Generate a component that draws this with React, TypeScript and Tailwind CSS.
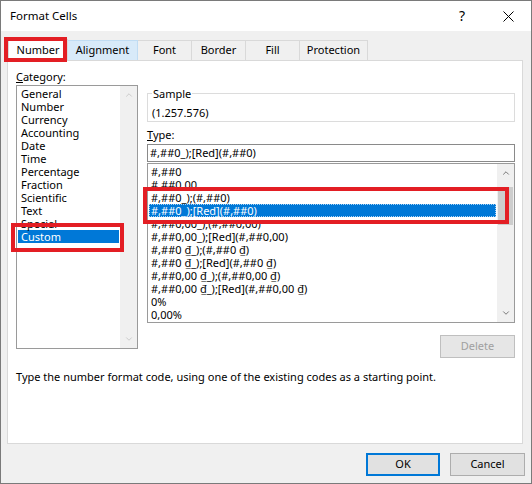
import { ChevronUp, ChevronDown } from "lucide-react";

const categories = [
  "General",
  "Number",
  "Currency",
  "Accounting",
  "Date",
  "Time",
  "Percentage",
  "Fraction",
  "Scientific",
  "Text",
  "Special",
  "Custom",
];

const formats = [
  "#,##0",
  "#,##0,00",
  "#,##0_);(#,##0)",
  "#,##0_);[Red](#,##0)",
  "#,##0,00_);(#,##0,00)",
  "#,##0,00_);[Red](#,##0,00)",
  "#,##0 ₫_);(#,##0 ₫)",
  "#,##0 ₫_);[Red](#,##0 ₫)",
  "#,##0,00 ₫_);(#,##0,00 ₫)",
  "#,##0,00 ₫_);[Red](#,##0,00 ₫)",
  "0%",
  "0,00%",
];

const tabs = [
  { label: "Alignment", w: "w-[71px]", hover: true },
  { label: "Font", w: "w-[55px]" },
  { label: "Border", w: "w-[55px]" },
  { label: "Fill", w: "w-[55px]" },
  { label: "Protection", w: "w-[69px]" },
];

export default function App() {
  return (
    <div
      className="relative w-[532px] h-[484px] bg-[#f0f0f0] border border-[#7a7a7a] text-[11px] text-black overflow-hidden"
      style={{ fontFamily: '"Noto Sans", "Open Sans", sans-serif' }}
    >
      {/* Title bar */}
      <div className="h-[30px] bg-white flex items-center pl-[9px] pr-[17px]">
        <span className="text-[11.5px]">Format Cells</span>
        <span className="ml-auto text-[14px] leading-none mr-[38px]">?</span>
        <svg width="11" height="11" viewBox="0 0 11 11" className="mt-px">
          <path d="M0.5 0.5 L10.5 10.5 M10.5 0.5 L0.5 10.5" stroke="#000" strokeWidth="1" />
        </svg>
      </div>

      {/* Tabs */}
      <div className="mt-[9px] h-[20px] flex items-end pl-[7px]">
        <div className="relative z-10 w-[60px] h-[22px] -mb-px bg-white border border-b-0 border-[#d9d9d9] flex items-center justify-center">
          Number
        </div>
        {tabs.map((t) => (
          <div
            key={t.label}
            className={`${t.w} h-[20px] -ml-px border border-b-0 flex items-center justify-center ${
              t.hover ? "bg-[#d8eaf9] border-[#c0dcf3] z-[1]" : "bg-[#f0f0f0] border-[#d9d9d9]"
            }`}
          >
            {t.label}
          </div>
        ))}
      </div>

      {/* Panel */}
      <div className="ml-[6px] w-[516px] h-[384px] bg-white border border-[#d9d9d9] pt-[8px] pl-[8px]">
        <div className="flex items-start">
          {/* Category column */}
          <div className="w-[122px]">
            <div className="h-[15px] leading-[15px]">
              <span className="underline">C</span>ategory:
            </div>
            <div className="mt-px h-[264px] border border-[#9a9a9a] flex">
              <div className="flex-1 pt-[1px] pl-px">
                {categories.map((c) => (
                  <div
                    key={c}
                    className={`h-[13px] leading-[13px] pl-[3px] ${
                      c === "Custom" ? "bg-[#0078d7] text-white mr-px" : ""
                    }`}
                  >
                    {c}
                  </div>
                ))}
              </div>
              <div className="w-[17px] bg-[#f0f0f0] flex flex-col items-center justify-between py-[4px]">
                <ChevronUp size={10} strokeWidth={2} color="#c4c4c4" />
                <ChevronDown size={10} strokeWidth={2} color="#c4c4c4" />
              </div>
            </div>
          </div>

          {/* Right column */}
          <div className="ml-[9px] w-[368px] mt-[17px]">
            <fieldset className="border border-[#dcdcdc] pl-[4px] pt-[4px] pb-px">
              <legend className="px-px leading-[15px]">Sample</legend>
              <div className="h-[15px] leading-[15px]">(1.257.576)</div>
            </fieldset>

            <div className="mt-[5px] h-[15px] leading-[15px]">
              <span className="underline">T</span>ype:
            </div>
            <div className="mt-[2px] h-[18px] border border-[#8a8a8a] pl-[2px] leading-[16px]">
              #,##0_);[Red](#,##0)
            </div>

            <div className="mt-px h-[160px] border border-[#9a9a9a] flex">
              <div className="flex-1 pt-[1px] pl-px">
                {formats.map((f, i) => (
                  <div
                    key={f}
                    className={`h-[13px] leading-[13px] pl-[2px] whitespace-nowrap ${
                      i === 3
                        ? "bg-[#0078d7] text-white outline outline-1 outline-dotted outline-offset-[-1px] outline-[#a8d2f4] mr-px"
                        : ""
                    }`}
                  >
                    {f}
                  </div>
                ))}
              </div>
              <div className="w-[17px] bg-[#f0f0f0] flex flex-col items-center py-[4px]">
                <ChevronUp size={10} strokeWidth={2} color="#606060" />
                <div className="mt-[9px] w-[15px] h-[38px] bg-[#cdcdcd]" />
                <div className="flex-1" />
                <ChevronDown size={10} strokeWidth={2} color="#606060" />
              </div>
            </div>

            <div className="mt-[12px] flex justify-end">
              <div className="w-[75px] h-[23px] bg-[#e6e6e6] border border-[#bfbfbf] text-[#a0a0a0] flex items-center justify-center">
                Delete
              </div>
            </div>
          </div>
        </div>

        <div className="mt-[11px] h-[15px] leading-[15px]">
          Type the number format code, using one of the existing codes as a starting point.
        </div>
      </div>

      {/* Buttons */}
      <div className="h-[39px] flex justify-end items-start pt-[9px] pr-[6px] gap-[10px]">
        <div className="w-[74px] h-[23px] bg-[#e1e1e1] border-2 border-[#0078d7] flex items-center justify-center">
          OK
        </div>
        <div className="w-[75px] h-[23px] bg-[#e1e1e1] border border-[#adadad] flex items-center justify-center">
          Cancel
        </div>
      </div>

      {/* Red annotation boxes */}
      <div className="absolute left-[3px] top-[36px] w-[63px] h-[25px] border-4 border-[#e31e24] z-20" />
      <div className="absolute left-[10px] top-[222px] w-[113px] h-[29px] border-4 border-[#e31e24] z-20" />
      <div className="absolute left-[142px] top-[186px] w-[366px] h-[37px] border-4 border-[#e31e24] z-20" />
    </div>
  );
}
